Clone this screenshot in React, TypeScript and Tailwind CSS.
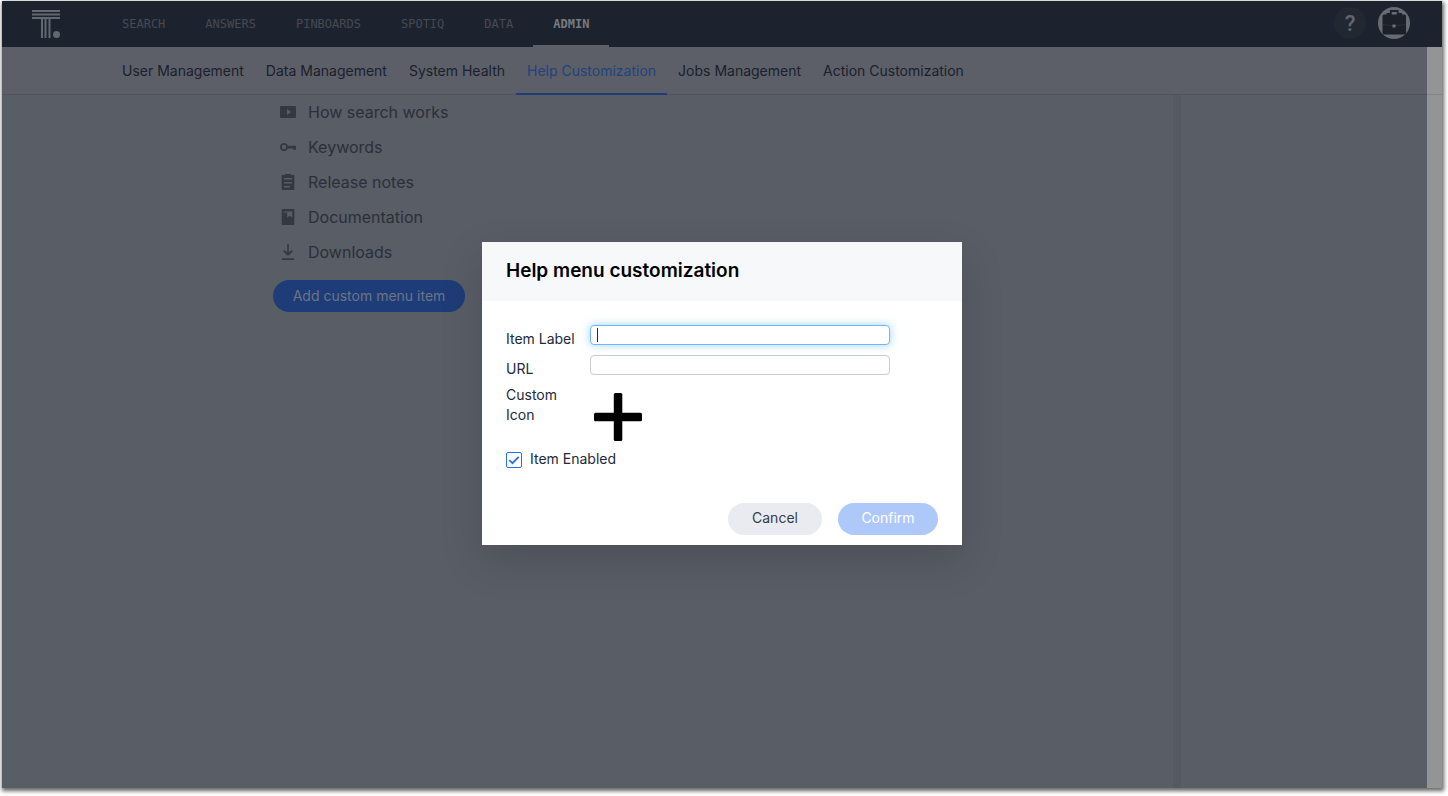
import React, { useState } from 'react';

const mainNav = ['SEARCH', 'ANSWERS', 'PINBOARDS', 'SPOTIQ', 'DATA', 'ADMIN'];
const subNav = [
  'User Management',
  'Data Management',
  'System Health',
  'Help Customization',
  'Jobs Management',
  'Action Customization',
];

const helpItems = [
  {
    label: 'How search works',
    icon: <path fillRule="evenodd" d="M1 2h14a1 1 0 0 1 1 1v10a1 1 0 0 1-1 1H1a1 1 0 0 1-1-1V3a1 1 0 0 1 1-1zM7 5v6l4-3z" />,
  },
  {
    label: 'Keywords',
    icon: (
      <path
        fillRule="evenodd"
        d="M4 4a4 4 0 0 1 3.8 2.8H16v4h-3V9.4H7.8A4 4 0 1 1 4 4zM4 5.800a2.200 2.200 0 1 0 0 4.400 2.200 2.200 0 0 0 0-4.400z"
      />
    ),
  },
  {
    label: 'Release notes',
    icon: (
      <path
        fillRule="evenodd"
        d="M5 1V0h6v1h2.500a.8.8 0 0 1 .8.8v13.400a.8.8 0 0 1-.8.8h-11a.8.8 0 0 1-.8-.8V1.800a.8.8 0 0 1 .8-.8zM4 4v1.500h8V4zM4 8v1.500h8V8zM4 12v1.500h6V12z"
      />
    ),
  },
  {
    label: 'Documentation',
    icon: (
      <path
        fillRule="evenodd"
        d="M2.500 0h11a.8.8 0 0 1 .8.8v14.400a.8.8 0 0 1-.8.8h-11a.8.8 0 0 1-.8-.8V.8a.8.8 0 0 1 .8-.8zM3.500 2.600v1h3.700v5L9.700 6.800l2.500 1.800V2.600z"
      />
    ),
  },
  {
    label: 'Downloads',
    icon: <path d="M7.200 0h1.600v8.800l2.900-2.800 1.200 1.200L8 12 3.100 7.200 4.300 6l2.900 2.800zM2 14.300h12V16H2z" />,
  },
];

function Logo() {
  return (
    <svg viewBox="0 0 28 28" className="h-7 w-7" fill="#63676f" aria-hidden="true">
      <path d="M0 0h28v2H0zM0 3.500h28v2H0zM0 7h28v2H0zM9 9h2v19H9zM12.500 9h2v19h-2zM16.500 9h2v19h-2z" />
      <circle cx="24.500" cy="24.500" r="3.500" />
    </svg>
  );
}

function Avatar() {
  return (
    <svg viewBox="0 0 32 32" className="h-8 w-8" aria-hidden="true">
      <circle cx="16" cy="16" r="16" fill="#686b71" />
      <path d="M12.800 8V4h6.900v4" fill="none" stroke="#1d212b" strokeWidth="1.800" />
      <path d="M8.500 6h4v2h-4zM20 6h4v2h-4z" fill="#1c202a" />
      <rect x="4.500" y="7.500" width="23.500" height="20" rx="1.500" fill="#1c202a" />
      <path d="M5 17.500q11 3 22.500 0" fill="none" stroke="#2b2f39" />
      <rect x="14.500" y="17.500" width="3" height="3" rx=".5" fill="#72757b" />
    </svg>
  );
}

function TopBar() {
  return (
    <header className="flex h-[46px] items-center bg-[#1d232e] pl-[30px] pr-8">
      <Logo />
      <nav
        aria-label="Main"
        className="ml-[42px] flex h-full font-['DejaVu_Sans_Mono',monospace] text-xs"
      >
        {mainNav.map((item) => (
          <a
            key={item}
            href="#"
            className={
              item === 'ADMIN'
                ? 'relative flex h-full items-center px-5 font-bold text-[#777a80] after:absolute after:inset-x-0 after:-bottom-px after:h-[3px] after:bg-[#5d6068]'
                : 'flex h-full items-center px-5 text-[#454a54]'
            }
          >
            {item}
          </a>
        ))}
      </nav>
      <div className="ml-auto flex items-center gap-3 pb-0.5">
        <button
          type="button"
          aria-label="Help"
          className="flex h-8 w-8 items-center justify-center rounded-full bg-[#222831] font-['Roboto',sans-serif] text-[22px] font-medium text-[#62666e]"
        >
          ?
        </button>
        <button type="button" aria-label="Profile">
          <Avatar />
        </button>
      </div>
    </header>
  );
}

function SubNav() {
  return (
    <nav
      aria-label="Admin sections"
      className="flex h-12 border-b border-[#50535d] bg-[#5c5f68] pl-[109px] text-sm text-[#1b202c]"
    >
      {subNav.map((item) => (
        <a
          key={item}
          href="#"
          className={
            item === 'Help Customization'
              ? 'relative flex items-center px-[11px] text-[#21427f] after:absolute after:inset-x-0 after:-bottom-px after:h-0.5 after:bg-[#1f3d77]'
              : 'flex items-center px-[11px]'
          }
        >
          {item}
        </a>
      ))}
    </nav>
  );
}

function HelpDialog() {
  const [label, setLabel] = useState('');
  const [url, setUrl] = useState('');
  const [enabled, setEnabled] = useState(true);

  return (
    <form
      role="dialog"
      aria-labelledby="dialog-title"
      onSubmit={(e) => e.preventDefault()}
      className="w-[480px] bg-white text-sm text-[#22293a] shadow-[0_16px_40px_rgba(0,0,0,0.15)]"
    >
      <h2
        id="dialog-title"
        className="flex h-[59px] items-center bg-[#f6f8fa] px-6 pb-0.5 text-[19px] font-semibold text-black"
      >
        Help menu customization
      </h2>
      <div className="px-6 pt-6">
        <div className="flex h-[30px]">
          <label htmlFor="item-label" className="w-[84px] pt-1 leading-5">
            Item Label
          </label>
          <div className="relative h-5 w-[300px]">
            <input
              id="item-label"
              value={label}
              onChange={(e) => setLabel(e.target.value)}
              className="block h-5 w-full rounded border border-[#71b7f5] bg-white px-2 shadow-[0_0_8px_rgba(90,180,250,0.6)] outline-none"
            />
            <span aria-hidden="true" className="absolute left-[7px] top-[3px] h-3.5 w-px bg-[#22293a]" />
          </div>
        </div>
        <div className="flex h-[30px]">
          <label htmlFor="item-url" className="w-[84px] pt-1 leading-5">
            URL
          </label>
          <input
            id="item-url"
            value={url}
            onChange={(e) => setUrl(e.target.value)}
            className="h-5 w-[300px] rounded border border-[#cccccf] bg-white px-2 outline-none"
          />
        </div>
        <div className="flex h-[60px]">
          <span className="w-[84px] pr-6 leading-5">Custom Icon</span>
          <button type="button" aria-label="Choose custom icon" className="ml-1 mt-2 h-12 w-12">
            <svg viewBox="0 0 48 48" className="h-12 w-12" aria-hidden="true">
              <rect x="19.800" y="0" width="8.500" height="48" rx="1.500" />
              <rect x="0" y="19.800" width="48" height="8.500" rx="1.500" />
            </svg>
          </button>
        </div>
        <label className="mt-1 flex items-center gap-2 leading-5">
          <span className="relative mt-0.5 h-4 w-4">
            <input
              type="checkbox"
              checked={enabled}
              onChange={(e) => setEnabled(e.target.checked)}
              className="peer block h-4 w-4 appearance-none rounded-xs border border-[#2770ef] bg-white"
            />
            <svg
              viewBox="0 0 16 16"
              className="pointer-events-none absolute inset-0 hidden h-4 w-4 peer-checked:block"
              aria-hidden="true"
            >
              <path d="M3.300 8.200l3.200 3 6.200-6.400" fill="none" stroke="#2770ef" strokeWidth="1.800" />
            </svg>
          </span>
          Item Enabled
        </label>
      </div>
      <div className="flex justify-end gap-4 px-6 pb-2.5 pt-[34px]">
        <button type="button" className="h-8 w-[94px] rounded-full bg-[#eaebf1] pb-0.5 text-[#343c4b]">
          Cancel
        </button>
        <button type="submit" className="h-8 w-[100px] rounded-full bg-[#aec8fa] pb-0.5 text-white">
          Confirm
        </button>
      </div>
    </form>
  );
}

export default function App() {
  return (
    <div className="flex min-h-screen flex-col bg-white pb-2 pl-0.5 pr-1.5 pt-px font-['Inter',sans-serif]">
      <div className="relative flex flex-1 flex-col bg-[#595d66] shadow-[1px_2px_4px_1px_rgba(0,0,0,0.6)]">
        <TopBar />
        <div className="flex flex-1">
          <div className="flex flex-1 flex-col">
            <SubNav />
            <main className="flex flex-1">
              <div className="flex-1 pl-[271px]">
                <ul className="text-base text-[#2b2f39]">
                  {helpItems.map((item) => (
                    <li key={item.label} className="flex h-[35px] items-center pb-0.5 pl-[7px]">
                      <svg viewBox="0 0 16 16" className="mr-3 h-4 w-4" fill="#343841" aria-hidden="true">
                        {item.icon}
                      </svg>
                      {item.label}
                    </li>
                  ))}
                </ul>
                <button
                  type="button"
                  className="mt-2.5 h-8 w-48 rounded-full bg-[#1e3c77] text-sm text-[#6c7588]"
                >
                  Add custom menu item
                </button>
              </div>
              <div className="w-2 bg-[#555962]" />
              <div className="w-[246px]" />
            </main>
          </div>
          <div className="w-[15px] bg-[#939496]">
            <div className="h-12 border-b border-[#828389]" />
          </div>
        </div>
        <div className="absolute inset-0 flex items-center justify-center pb-0.5">
          <HelpDialog />
        </div>
      </div>
    </div>
  );
}
